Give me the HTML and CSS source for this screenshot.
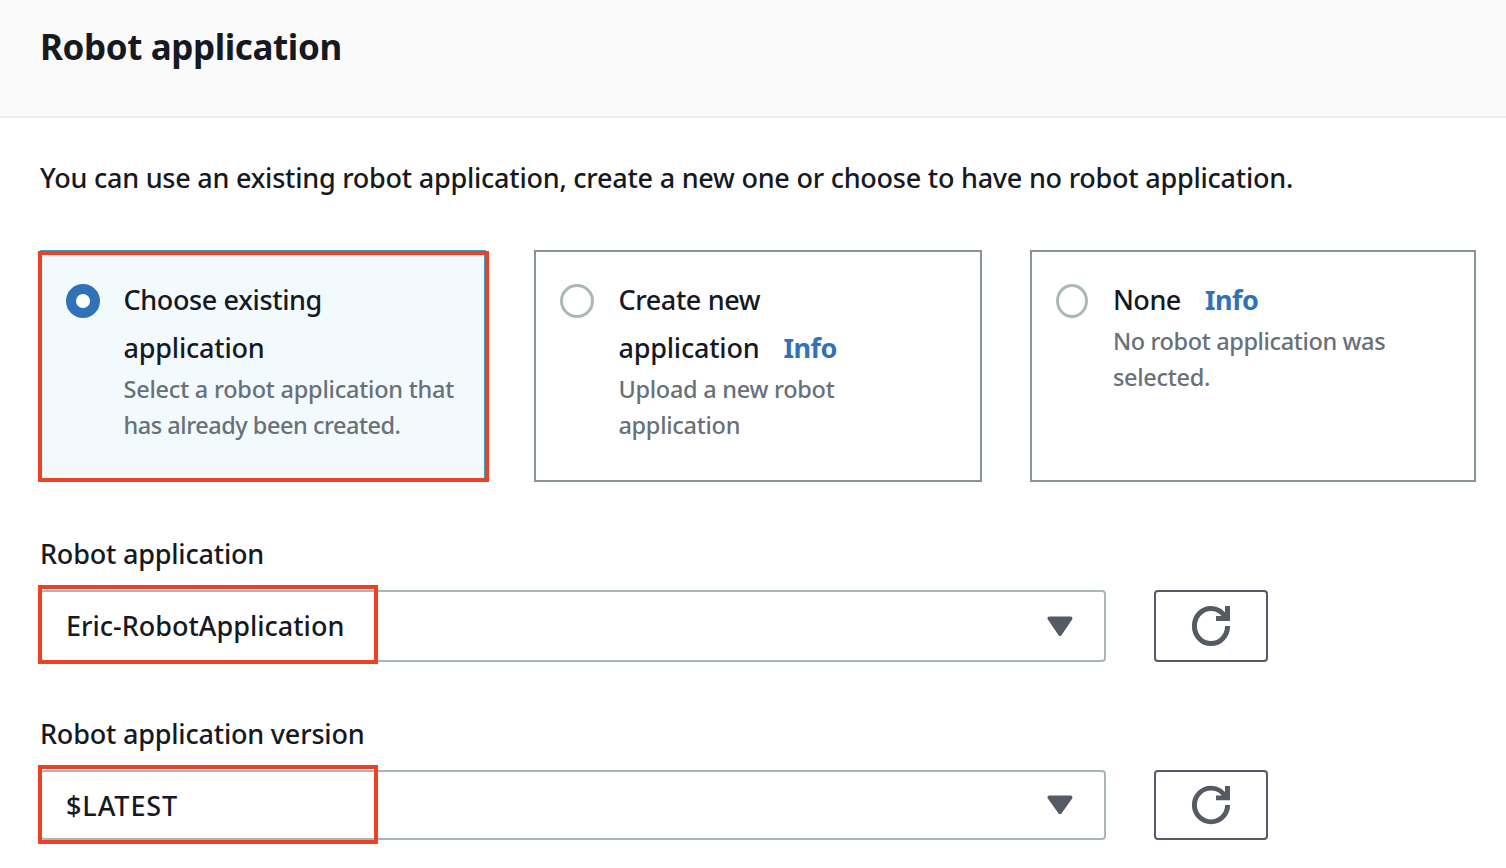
FILE: index.html
```html
<!DOCTYPE html>
<html lang="en">
<head>
<meta charset="utf-8">
<title>Robot application</title>
<link rel="stylesheet" href="styles.css">
</head>
<body>
<header class="panel-header"><h1 class="panel-title">Robot application</h1></header>
<main class="panel-body">
  <p class="intro">You can use an existing robot application, create a new one or choose to have no robot application.</p>
  <div class="tiles">
    <label class="tile tile-selected">
      <span class="radio radio-on"></span>
      <span class="tile-text">
        <span class="tile-name"><span class="tight">Choose existing</span><br>application</span>
        <span class="tile-desc"><span class="loose">Select a robot application that</span><br><span class="tighter">has already been created.</span></span>
      </span>
      <span class="mark mark-tile"></span>
    </label>
    <label class="tile">
      <span class="radio"></span>
      <span class="tile-text">
        <span class="tile-name"><span class="tight">Create new</span><br>application<a class="info">Info</a></span>
        <span class="tile-desc">Upload a new robot<br>application</span>
      </span>
    </label>
    <label class="tile">
      <span class="radio radio-narrow"></span>
      <span class="tile-text">
        <span class="tile-name"><span class="tighter">None</span><a class="info">Info</a></span>
        <span class="tile-desc"><span class="tight">No robot application was</span><br>selected.</span>
      </span>
    </label>
  </div>
  <section class="field">
    <div class="field-label">Robot application</div>
    <div class="field-row">
      <div class="select">
        <span class="value">Eric-RobotApplication</span>
        <svg class="caret" width="26" height="21" viewBox="0 0 26 21"><path d="M2.5 2.5H23.5L13 18Z"/></svg>
        <span class="mark mark-select"></span>
      </div>
      <button class="refresh" aria-label="Refresh"><svg width="40" height="42" viewBox="0 0 40 42"><ellipse class="ring" cx="20" cy="21" rx="16.6" ry="17.6" pathLength="360" stroke-dasharray="334 26"/><path class="arrow" d="M36.5 1V13.5H25"/></svg></button>
    </div>
  </section>
  <section class="field field-short">
    <div class="field-label">Robot application version</div>
    <div class="field-row">
      <div class="select">
        <span class="value value-caps">$LATEST</span>
        <svg class="caret" width="26" height="20" viewBox="0 0 26 21" preserveAspectRatio="none"><path d="M2.5 2.5H23.5L13 18Z"/></svg>
        <span class="mark mark-select"></span>
      </div>
      <button class="refresh" aria-label="Refresh"><svg width="40" height="40" viewBox="0 0 40 42" preserveAspectRatio="none"><ellipse class="ring" cx="20" cy="21" rx="16.6" ry="17.6" pathLength="360" stroke-dasharray="334 26"/><path class="arrow" d="M36.5 1V13.5H25"/></svg></button>
    </div>
  </section>
</main>
</body>
</html>
```
FILE: styles.css
```css
* { box-sizing: border-box; }
body {
  margin: 0;
  min-height: 868px;
  background: #fff;
  color: #16191f;
  font: 500 27px/48px "Noto Sans", sans-serif;
}
.panel-header {
  height: 118px;
  padding: 23px 40px;
  background: #fafafa;
  border-bottom: 2px solid #eaeded;
}
.panel-title {
  margin: 0;
  font-size: 35px;
  line-height: 48px;
  font-weight: 700;
  letter-spacing: -0.4px;
}
.panel-body { padding: 36px 30px 0 40px; }
.intro { margin: 0; letter-spacing: -0.235px; white-space: nowrap; }
.tiles {
  display: grid;
  grid-template-columns: 446px 448px 446px;
  gap: 48px;
  height: 232px;
  margin-top: 48px;
}
.tile {
  position: relative;
  display: flex;
  gap: 24.4px;
  padding: 24px;
  border: 2px solid #879596;
}
.tile-selected { gap: 23.5px; background: #f2fafd; border-color: #3a9fc4; }
.radio {
  flex: none;
  width: 34px;
  height: 34px;
  margin-top: 8px;
  border: 3px solid #aab7b8;
  border-radius: 50%;
  background: #fff;
}
.radio-narrow { width: 32px; margin-right: 0.5px; }
.radio-on { border: 10px solid #3072b8; }
.tile-text, .tile-name, .tile-desc { display: block; white-space: nowrap; }
.tile-name { letter-spacing: -0.2px; }
.tile-desc {
  margin-top: -1px;
  color: #687078;
  font-size: 23.5px;
  line-height: 36px;
  letter-spacing: -0.27px;
}
.loose { letter-spacing: -0.22px; }
.tight { letter-spacing: -0.37px; }
.tighter { letter-spacing: -0.47px; }
.info { margin-left: 24px; color: #3072b8; font-weight: 700; letter-spacing: -0.5px; }
.field { margin-top: 48px; height: 132px; }
.field-label { height: 60px; letter-spacing: -0.2px; }
.field-row { display: flex; gap: 48px; height: 72px; }
.field-short .field-row { height: 70px; }
.select {
  position: relative;
  display: flex;
  align-items: center;
  justify-content: space-between;
  width: 1066px;
  padding: 0 31px 0 24px;
  border: 2px solid #aab7b8;
  border-radius: 4px;
}
.value-caps { padding-top: 2px; letter-spacing: 0.9px; }
.caret { fill: #545b64; stroke: #545b64; stroke-width: 4; stroke-linejoin: round; }
.refresh {
  display: flex;
  align-items: center;
  justify-content: center;
  width: 114px;
  padding: 0;
  border: 2px solid #545b64;
  border-radius: 4px;
  background: #fff;
}
.ring, .arrow { fill: none; stroke: #545b64; stroke-width: 5; }
.mark { position: absolute; border: 4px solid #ed4125; }
.mark-tile { left: -4px; top: -1px; width: 451px; height: 231px; }
.mark-select { left: -4px; top: -7px; width: 340px; height: 79px; }
```
